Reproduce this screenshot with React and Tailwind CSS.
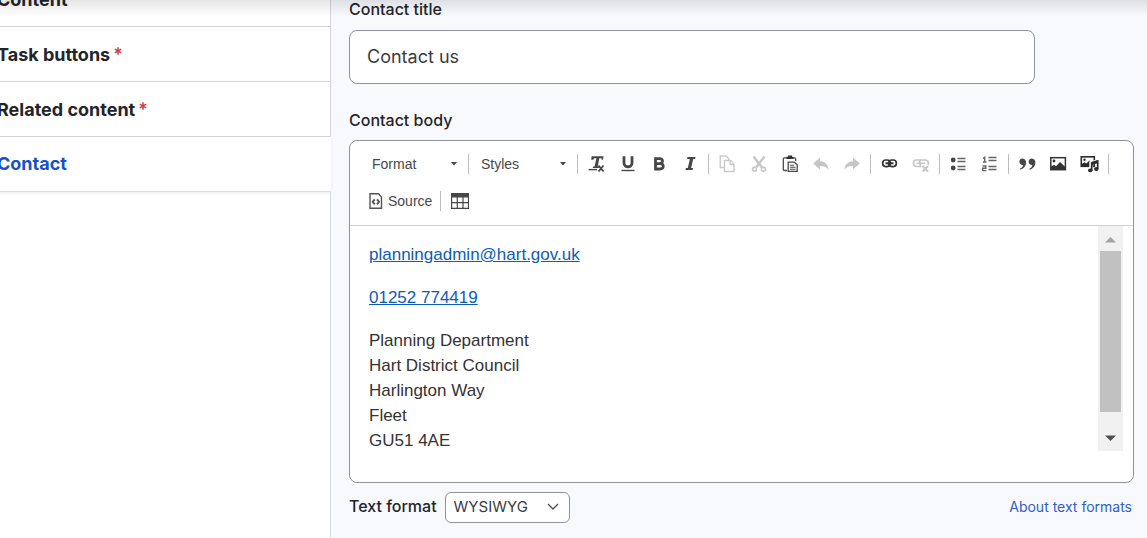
import React from "react";

const TABS = [
  { id: "content", label: "Content" },
  { id: "task-buttons", label: "Task buttons", required: true },
  { id: "related-content", label: "Related content", required: true },
  { id: "contact", label: "Contact", active: true },
];

const ADDRESS = [
  "Planning Department",
  "Hart District Council",
  "Harlington Way",
  "Fleet",
  "GU51 4AE",
];

/* ICONS */
const ICONS = {
  removeFormat: (
    <>
      <path d="M3.600 1.200h12l-.7 3.500h-1.300l-.1-1.500h-2.200L9.700 11.400h1.800l-.3 1.600H4.800l.3-1.600h1.500L8.400 3.200H6.200L5.200 4.700H3.200z" fill="#474747" />
      <path d="M.5 14.600h8.500" stroke="#474747" strokeWidth="1.400" />
      <path d="M10.500 10.500l5 6M15.500 10.500l-5 6" stroke="#474747" strokeWidth="1.800" />
    </>
  ),
  underline: (
    <>
      <path d="M5 1.200v6.800c0 5 8 5 8 0V1.200" stroke="#474747" strokeWidth="2.800" fill="none" />
      <path d="M2.500 15.500h13" stroke="#474747" strokeWidth="1.400" />
    </>
  ),
  bold: (
    <path
      d="M5.500 3.600h4c4 0 4 5 0 5h-4zM5.500 8.600h4.500c4.300 0 4.300 5.400 0 5.400h-4.500z"
      stroke="#474747"
      strokeWidth="2.800"
      fill="none"
    />
  ),
  italic: (
    <path d="M6.500 2h8l-.4 2h-1.900L10.100 13h1.900l-.4 2H4.500l.4-2h1.900L8.900 4H6.100z" fill="#474747" />
  ),
  copy: (
    <g fill="#fff" stroke="#cacaca" strokeWidth="1.400">
      <path d="M1.200 1h5.800l3 3v8.500H1.200z" />
      <path d="M5.500 5.500h6l3.500 3.500v7.500H5.500z" />
      <path d="M11.200 5.700v3.600H15" />
    </g>
  ),
  cut: (
    <g fill="none" stroke="#c6c6c6">
      <path d="M3.500 1.500l8.500 11M14.500 1.500L6 12.500" strokeWidth="2.400" />
      <circle cx="4.500" cy="14.200" r="2" strokeWidth="1.500" />
      <circle cx="13.500" cy="14.200" r="2" strokeWidth="1.500" />
    </g>
  ),
  paste: (
    <g fill="none" stroke="#4a4a4a">
      <path d="M6 15.500H3.500q-1.200 0-1.200-1.200V4q0-1.200 1.200-1.200h10q1.200 0 1.200 1.200v2" strokeWidth="1.300" />
      <path d="M5.500 3.900V1.800H7V.600h4v1.200h1.500v2.100z" fill="#333" stroke="none" />
      <path d="M7.200 7.200h6l3 2.500v6.700h-9z" fill="#fff" strokeWidth="1.300" />
      <path d="M9 10.300h4M9 12.300h5.500M9 14.300h5.500" strokeWidth="1.100" />
    </g>
  ),
  undo: (
    <path d="M8 2.500v3.700c4.500.2 8 2.800 8.500 8.500C14.500 12 12 11 8 11v3.500L1.200 8.500z" fill="#c6c6c6" />
  ),
  redo: (
    <path d="M10 2.500v3.700c-4.500.2-8 2.800-8.500 8.500C3.500 12 6 11 10 11v3.500l6.800-6z" fill="#c6c6c6" />
  ),
  link: (
    <g fill="none" stroke="#333" strokeWidth="1.700">
      <rect x="1.700" y="5" width="7.600" height="6.600" rx="3" />
      <rect x="7.700" y="5" width="7.600" height="6.600" rx="3" />
      <path d="M4.500 8.300h8" strokeWidth="2" />
    </g>
  ),
  unlink: (
    <g fill="none" stroke="#c6c6c6" strokeWidth="1.600">
      <path d="M9 5H4.200C.500 5 .500 11.500 4.200 11.500H9" />
      <path d="M8 5h5.300c3 0 3.800 3 2.700 5M4.500 8.300h8.500" />
      <path d="M7 5.500q2 2 1 5.500" />
      <path d="M10.500 11l5.500 5.500M16 11l-5.500 5.500" strokeWidth="2" />
    </g>
  ),
  bulletList: (
    <>
      <circle cx="3.200" cy="5" r="2.400" fill="#474747" />
      <circle cx="3.200" cy="13" r="2.400" fill="#474747" />
      <path d="M7.500 3.500h8M7.500 6.500h8M7.500 11.500h8M7.500 14.500h8" stroke="#666" strokeWidth="1.400" />
    </>
  ),
  numberList: (
    <>
      <path
        d="M2 3.300l1.700-1v4.600M2 7h3.500M1.500 11h3.300v2.200H1.700v2.400h3.600"
        stroke="#666"
        strokeWidth="1.400"
        fill="none"
      />
      <path d="M7.500 2.500h8M7.500 5.500h8M7.500 11.500h8M7.500 14.500h8" stroke="#666" strokeWidth="1.400" />
    </>
  ),
  quote: (
    <g fill="#474747">
      <path d="M3.500 3.500c5.200 0 4.900 9.500-2.300 11.300v-1.300c2-.8 2.900-2 2.700-3.500C-.6 10-.8 3.500 3.500 3.500z" />
      <path d="M12.800 3.500c5.200 0 4.900 9.500-2.300 11.300v-1.300c2-.8 2.900-2 2.700-3.500C8.700 10 8.500 3.500 12.800 3.500z" />
    </g>
  ),
  image: (
    <>
      <rect x=".8" y="2.700" width="14.600" height="12" fill="none" stroke="#333" strokeWidth="1.500" />
      <circle cx="4" cy="6" r="1.400" fill="#333" />
      <path d="M1 14.500v-2.700l3-2 2 1.500 4-4.300 5.300 5v2.500z" fill="#333" />
    </>
  ),
  media: (
    <>
      <rect x=".3" y="1.800" width="13" height="9.500" fill="none" stroke="#2b2b2b" strokeWidth="1.600" />
      <circle cx="3.500" cy="4.700" r="1.200" fill="#2b2b2b" />
      <path d="M.5 11V9.300l3-2 1.700 1.200L8.500 5.500l3 3V11z" fill="#2b2b2b" />
      <path d="M10 14.500V7.800l7-1.800v7.500" stroke="#fff" strokeWidth="3.500" fill="none" />
      <path d="M10.700 14.800V8l6-1.800v7.500" stroke="#2b2b2b" strokeWidth="1.700" fill="none" />
      <path d="M10.700 7l6-2v3.200l-6 1.800z" fill="#2b2b2b" />
      <ellipse cx="9.300" cy="15.300" rx="2.300" ry="1.900" fill="#2b2b2b" />
      <ellipse cx="15.300" cy="14" rx="2.300" ry="1.900" fill="#2b2b2b" />
    </>
  ),
  table: (
    <>
      <rect x="0" y="1" width="18" height="16" fill="#474747" />
      <path
        d="M1.200 5.600h4.500v4.400H1.200zM6.900 5.600h4.500v4.400H6.900zM12.600 5.600h4.300v4.400h-4.300zM1.200 11.200h4.500v4.500H1.200zM6.900 11.200h4.500v4.500H6.900zM12.600 11.200h4.300v4.500h-4.300z"
        fill="#fff"
      />
    </>
  ),
};

const TOOL_GROUPS = [
  [
    ["removeFormat", "Remove format"],
    ["underline", "Underline"],
    ["bold", "Bold"],
    ["italic", "Italic"],
  ],
  [
    ["copy", "Copy", true],
    ["cut", "Cut", true],
    ["paste", "Paste"],
    ["undo", "Undo", true],
    ["redo", "Redo", true],
  ],
  [
    ["link", "Link"],
    ["unlink", "Unlink", true],
  ],
  [
    ["bulletList", "Bulleted list"],
    ["numberList", "Numbered list"],
  ],
  [
    ["quote", "Block quote"],
    ["image", "Image"],
    ["media", "Insert media"],
  ],
];

function Separator() {
  return <span className="mx-[3px] h-5 w-px bg-[#bcbcbc]" />;
}

function ToolButton({ icon, label, disabled }) {
  return (
    <button
      type="button"
      title={label}
      aria-label={label}
      disabled={disabled}
      className="flex h-[31px] w-[31px] items-center justify-center"
    >
      <svg width="18" height="18" viewBox="0 0 18 18" className="overflow-visible">
        {ICONS[icon]}
      </svg>
    </button>
  );
}

function Combo({ label }) {
  return (
    <div className="flex items-center">
      <div className="relative">
        <select
          aria-label={label}
          className="h-[31px] w-[102px] appearance-none bg-transparent pl-[9px] text-sm text-[#484848]"
        >
          <option>{label}</option>
        </select>
        <svg
          width="6"
          height="4"
          viewBox="0 0 6 4"
          className="pointer-events-none absolute top-[14px] right-2"
        >
          <path d="M0 0h6L3 3.500z" fill="#474747" />
        </svg>
      </div>
      <Separator />
    </div>
  );
}

function RequiredMark() {
  return (
    <svg width="8" height="8" viewBox="0 0 8 8" className="mb-2 ml-1" aria-label="required">
      <path d="M4 .2v7.600M.8 2.100l6.400 3.800M7.200 2.100L.8 5.900" stroke="#c9414b" strokeWidth="1.500" />
    </svg>
  );
}

function Sidebar() {
  return (
    <nav className="-mt-7 flex w-[331px] shrink-0 flex-col bg-white">
      {TABS.map((tab) => (
        <a
          key={tab.id}
          href={`#${tab.id}`}
          className={
            tab.active
              ? "-ml-[3px] flex h-[55px] items-center border-b border-[#dcdce0] text-lg font-bold text-[#1552c4] shadow-[0_2px_3px_rgba(0,0,0,0.06)]"
              : "-ml-[3px] flex h-[55px] items-center border-r border-b border-[#d4d4d8] pt-px text-lg font-bold text-[#232429]"
          }
        >
          {tab.label}
          {tab.required && <RequiredMark />}
        </a>
      ))}
      <div className="flex-1 border-r border-[#d8dade]" />
    </nav>
  );
}

function Toolbar() {
  return (
    <div className="flex flex-wrap gap-y-1.5 border-b border-[#d1d1d1] pt-[7px] pb-[9px] pl-[13px] font-['Liberation_Sans',Arial,sans-serif]">
      <Combo label="Format" />
      <Combo label="Styles" />
      {TOOL_GROUPS.map((group) => (
        <div key={group[0][0]} className="flex items-center">
          {group.map(([icon, label, disabled]) => (
            <ToolButton key={icon} icon={icon} label={label} disabled={disabled} />
          ))}
          <Separator />
        </div>
      ))}
      <div className="flex items-center">
        <button
          type="button"
          className="flex h-[31px] items-center gap-[5px] pr-[5px] pl-[6px] text-sm text-[#484848]"
        >
          <svg width="14" height="16" viewBox="0 0 14 16" fill="none" stroke="#555" strokeWidth="1.400">
            <path d="M1 .8h8.500L12.500 4v11.200H1z" />
            <path d="M5.700 6.300L3.700 8.800l2 2.500M8 6.300l2 2.500-2 2.500" strokeWidth="1.900" />
          </svg>
          Source
        </button>
        <Separator />
        <ToolButton icon="table" label="Table" />
      </div>
    </div>
  );
}

function Scrollbar() {
  return (
    <div className="flex w-[25px] flex-col items-center bg-[#f1f1f1]">
      <svg width="25" height="25" viewBox="0 0 25 25">
        <path d="M7 16.500h11L12.500 11z" fill="#a3a3a3" />
      </svg>
      <div className="w-[21px] flex-1 bg-[#c1c1c1]" />
      <div className="h-[14px]" />
      <svg width="25" height="25" viewBox="0 0 25 25">
        <path d="M7 9.500h11L12.500 15z" fill="#505050" />
      </svg>
    </div>
  );
}

function Editor() {
  return (
    <div
      role="group"
      aria-labelledby="contact-body-label"
      className="rounded-lg border border-[#8e929c] bg-white pb-[31px]"
    >
      <Toolbar />
      <div className="mr-[10px] flex h-[225px] overflow-hidden">
        {/* BODY TEXT */}
        <div className="flex-1 pt-4 pl-[19px] font-['Liberation_Sans',Arial,sans-serif] text-[17px] leading-[25px] text-[#333]">
          <p className="mb-[18px]">
            <a href="mailto:planningadmin@hart.gov.uk" className="text-[#0d5cb6] underline">
              planningadmin@hart.gov.uk
            </a>
          </p>
          <p className="mb-[18px]">
            <a href="tel:01252774419" className="text-[#0d5cb6] underline">
              01252 774419
            </a>
          </p>
          <p>
            {ADDRESS.map((line) => (
              <span key={line} className="block">
                {line}
              </span>
            ))}
          </p>
        </div>
        <Scrollbar />
      </div>
    </div>
  );
}

export default function App() {
  return (
    <div className="relative flex min-h-screen overflow-hidden bg-[#f8f9fd] font-['Inter',sans-serif] text-[#232429]">
      {/* SHADOW OF THE STICKY HEADER */}
      <div className="pointer-events-none absolute inset-x-0 top-0 z-10 h-4 bg-linear-to-b from-black/10 to-transparent" />

      <Sidebar />

      <main className="min-w-0 flex-1 pr-[13px] pl-[18px]">
        <label htmlFor="contact-title" className="block pb-3 text-base leading-[18px] font-medium">
          Contact title
        </label>
        <input
          id="contact-title"
          type="text"
          defaultValue="Contact us"
          className="block h-[54px] w-full max-w-[686px] rounded-lg border border-[#8e929c] bg-white px-[17px] pb-0.5 text-lg text-[#3a3b40]"
        />

        <h2 id="contact-body-label" className="pt-[27px] pb-[11px] text-base leading-[18px] font-medium">
          Contact body
        </h2>
        <Editor />

        {/* TEXT FORMAT */}
        <div className="mt-[9px] flex items-center">
          <label htmlFor="text-format" className="pb-1 text-base leading-[18px] font-medium">
            Text format
          </label>
          <div className="relative ml-2">
            <select
              id="text-format"
              className="block h-[31px] w-[125px] appearance-none rounded-md border border-[#8e929c] bg-white pl-2 text-[15px] text-[#3a3b40]"
            >
              <option>WYSIWYG</option>
            </select>
            <svg
              width="12"
              height="8"
              viewBox="0 0 12 8"
              className="pointer-events-none absolute top-[11px] right-[11px]"
            >
              <path d="M1 1l5 5 5-5" fill="none" stroke="#4a4b50" strokeWidth="1.300" />
            </svg>
          </div>
          <a href="#formats" className="mr-0.5 ml-auto pb-0.5 text-sm text-[#2f5fc4]">
            About text formats
          </a>
        </div>
      </main>
    </div>
  );
}
